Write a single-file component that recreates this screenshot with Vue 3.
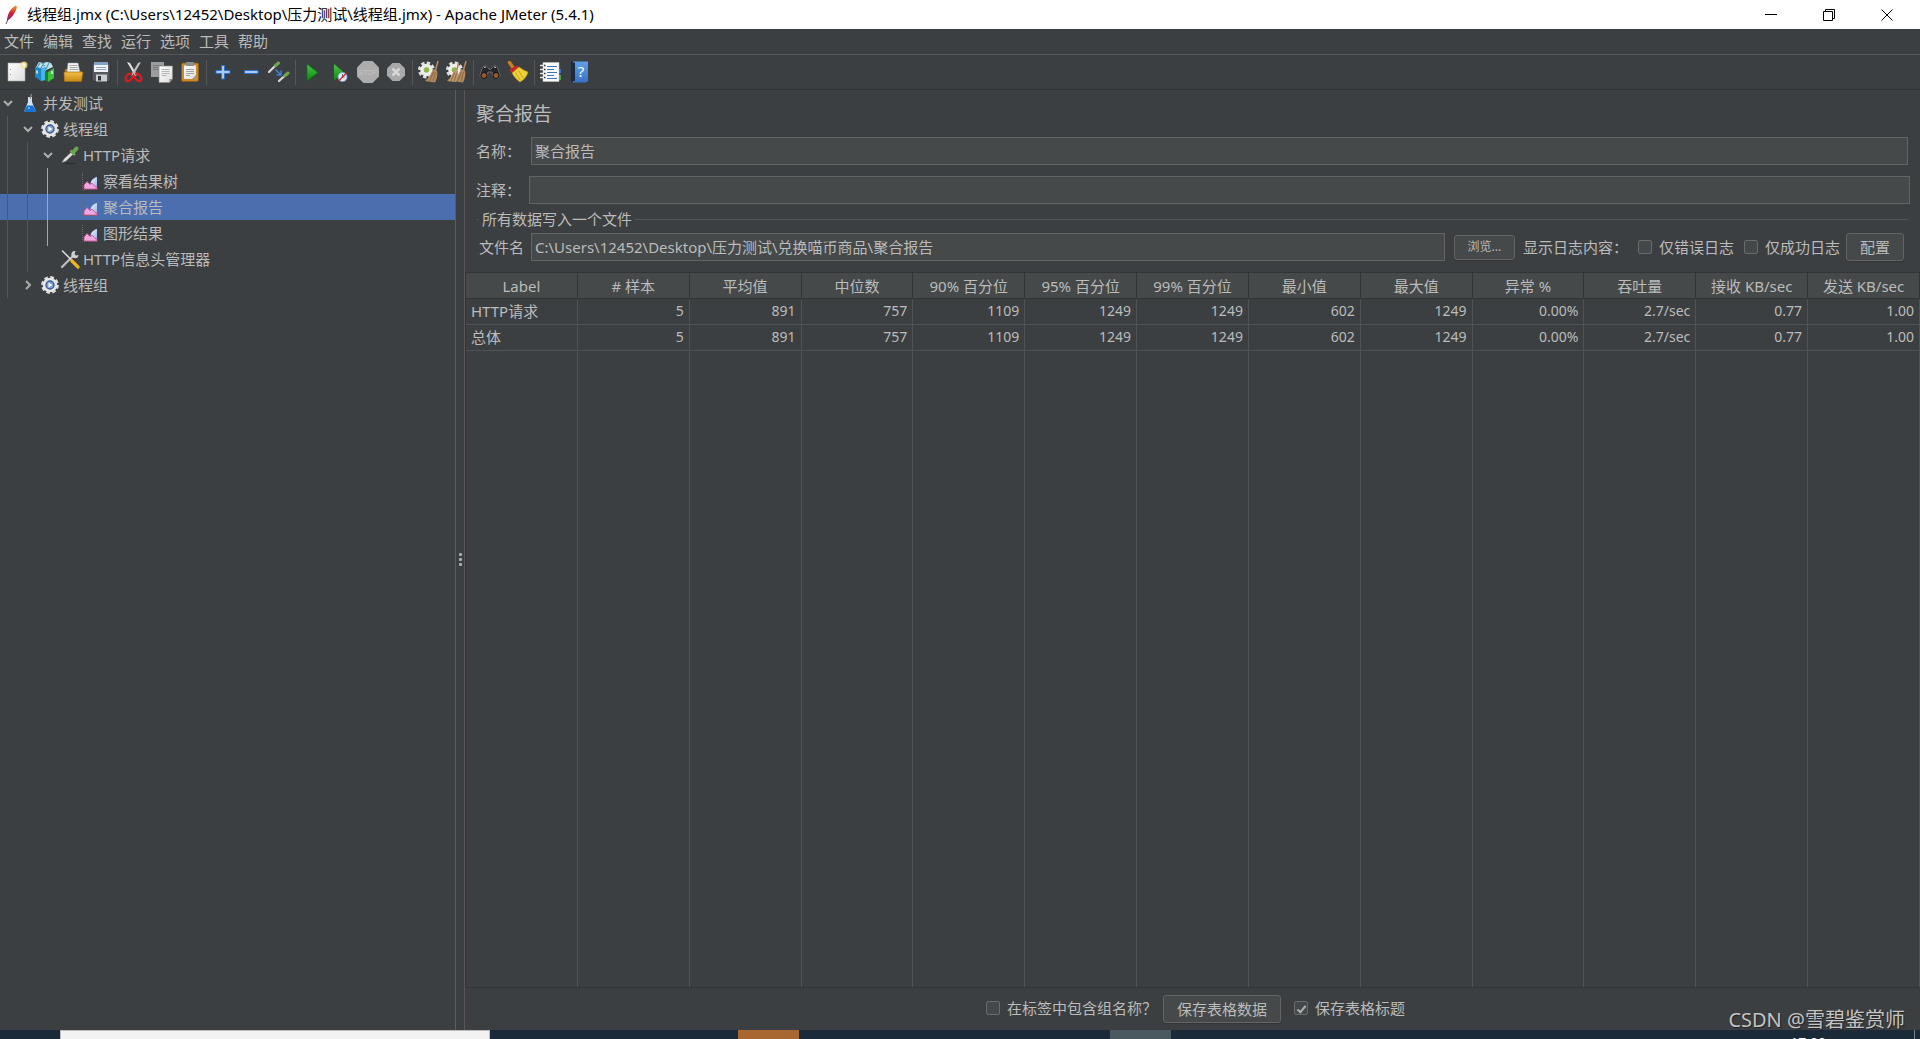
<script setup>
import { ref } from 'vue'

const title = '线程组.jmx (C:\\Users\\12452\\Desktop\\压力测试\\线程组.jmx) - Apache JMeter (5.4.1)'
const menus = ['文件', '编辑', '查找', '运行', '选项', '工具', '帮助']

const tools = [
  [
    { id: 'new', label: '新建' },
    { id: 'templates', label: '模板' },
    { id: 'open', label: '打开' },
    { id: 'save', label: '保存' }
  ],
  [
    { id: 'cut', label: '剪切' },
    { id: 'copy', label: '复制' },
    { id: 'paste', label: '粘贴' }
  ],
  [
    { id: 'expand', label: '全部展开' },
    { id: 'collapse', label: '全部折叠' },
    { id: 'toggle', label: '切换' }
  ],
  [
    { id: 'start', label: '启动' },
    { id: 'start-now', label: '不停顿开始' },
    { id: 'stop', label: '停止' },
    { id: 'shutdown', label: '关闭' }
  ],
  [
    { id: 'clear', label: '清除' },
    { id: 'clear-all', label: '清除全部' }
  ],
  [
    { id: 'search', label: '查找' },
    { id: 'reset', label: '重置查找' }
  ],
  [
    { id: 'functions', label: '函数助手对话框' },
    { id: 'help', label: '帮助' }
  ]
]

const tree = [
  { level: 0, icon: 'flask', text: '并发测试', state: 'open' },
  { level: 1, icon: 'gear', text: '线程组', state: 'open' },
  { level: 2, icon: 'dropper', text: 'HTTP请求', state: 'open' },
  { level: 3, icon: 'chart', text: '察看结果树' },
  { level: 3, icon: 'chart', text: '聚合报告', selected: true },
  { level: 3, icon: 'chart', text: '图形结果' },
  { level: 2, icon: 'wrench', text: 'HTTP信息头管理器' },
  { level: 1, icon: 'gear', text: '线程组', state: 'closed' }
]

const columns = [
  'Label', '# 样本', '平均值', '中位数', '90% 百分位', '95% 百分位', '99% 百分位',
  '最小值', '最大值', '异常 %', '吞吐量', '接收 KB/sec', '发送 KB/sec'
]
const rows = [
  ['HTTP请求', '5', '891', '757', '1109', '1249', '1249', '602', '1249', '0.00%', '2.7/sec', '0.77', '1.00'],
  ['总体', '5', '891', '757', '1109', '1249', '1249', '602', '1249', '0.00%', '2.7/sec', '0.77', '1.00']
]

const name = ref('聚合报告')
const comment = ref('')
const file = ref('C:\\Users\\12452\\Desktop\\压力测试\\兑换喵币商品\\聚合报告')
const errorsOnly = ref(false)
const successOnly = ref(false)
const includeGroup = ref(false)
const saveHeader = ref(true)
</script>

<template>
  <div class="window">
    <svg class="defs" width="0" height="0" aria-hidden="true">
      <defs>
        <linearGradient id="gFeather" x1="0" y1="1" x2="0" y2="0">
          <stop offset="0" stop-color="#8a2a86" /><stop offset=".5" stop-color="#c9203c" /><stop offset="1" stop-color="#f59a23" />
        </linearGradient>
        <linearGradient id="gGreen" x1="0" y1="0" x2="0" y2="1">
          <stop offset="0" stop-color="#4bc24b" /><stop offset="1" stop-color="#0a8a0a" />
        </linearGradient>
        <linearGradient id="gGold" x1="0" y1="0" x2="0" y2="1">
          <stop offset="0" stop-color="#f0bf4a" /><stop offset="1" stop-color="#c98a10" />
        </linearGradient>
        <linearGradient id="gPaper" x1="0" y1="0" x2="1" y2="1">
          <stop offset="0" stop-color="#ffffff" /><stop offset="1" stop-color="#dcdcdc" />
        </linearGradient>
        <linearGradient id="gBook" x1="0" y1="0" x2="0" y2="1">
          <stop offset="0" stop-color="#5f9fe8" /><stop offset="1" stop-color="#3a72c4" />
        </linearGradient>
        <linearGradient id="gBlob" x1="0" y1="0" x2="1" y2="1">
          <stop offset="0" stop-color="#f4f8ff" /><stop offset="1" stop-color="#8fb2e6" />
        </linearGradient>
      </defs>
    </svg>

    <header class="titlebar">
      <svg class="feather" width="14" height="20" viewBox="0 0 14 20" aria-hidden="true">
        <path d="M2 19 4.500 13" stroke="#555" stroke-width="1" fill="none" />
        <path d="M3 16C3 11 5.500 5 9 2.500c1.500-1.500 3-2 3.500-1.500.8 1 0 3-1 5-1.500 3.500-4 7-8.500 10z" fill="url(#gFeather)" />
      </svg>
      <h1>{{ title }}</h1>
      <div class="controls">
        <button type="button" aria-label="最小化"><svg width="12" height="12" viewBox="0 0 12 12"><path d="M0 5.500h12" /></svg></button>
        <button type="button" aria-label="还原"><svg width="12" height="12" viewBox="0 0 12 12"><path d="M.5 2.500h9v9h-9zM2.500 2.500v-2h9v9h-2" /></svg></button>
        <button type="button" aria-label="关闭"><svg width="12" height="12" viewBox="0 0 12 12"><path d="M.5.5l11 11M11.500.5l-11 11" /></svg></button>
      </div>
    </header>

    <nav class="menubar">
      <button v-for="m in menus" :key="m" type="button">{{ m }}</button>
    </nav>

    <div class="toolbar" role="toolbar">
      <div v-for="(group, g) in tools" :key="g" class="group">
        <button v-for="t in group" :key="t.id" type="button" :aria-label="t.label">
          <svg width="22" height="22" viewBox="0 0 22 22" fill="none" aria-hidden="true">
            <template v-if="t.id === 'new'">
              <path d="M2 2h17v18H2z" fill="url(#gPaper)" stroke="#a8a8a0" stroke-width=".6" />
              <path d="M4.500 8v1M4.500 13v1" stroke="#999" />
              <circle cx="18" cy="4" r="3.500" fill="#f5e27a" opacity=".8" /><circle cx="18" cy="4" r="1.800" fill="#fffbe0" />
            </template>
            <template v-else-if="t.id === 'templates'">
              <path d="M2 6l3-5 4 1 4-1 4 1 2 4-7 3-9 1z" fill="#c5e2ea" />
              <path d="M6 2L3 7M10 2L7 7M15 2l-3 6M8 2l3 3" stroke="#4d9cb8" stroke-width="1.200" />
              <path d="M1 6l6 1v13l-6-4z" fill="#1d87c8" /><path d="M7 7l5-1v13l-5 1z" fill="#45b4ea" />
              <path d="M11 10l3 1v10l-3-2z" fill="#128a1c" /><path d="M14 11l6-4v10l-6 4z" fill="#3fbf3c" />
              <path d="M3 9.500v3M18 10v3" stroke="#e8f6ff" stroke-width="1.500" />
            </template>
            <template v-else-if="t.id === 'open'">
              <path d="M3 8h5l1 2h10v9H2z" fill="#b67c12" />
              <path d="M6 2h10l2 10H5z" fill="#f2f2f2" stroke="#aaa" stroke-width=".5" />
              <path d="M7.500 4.500h8M7.500 6.500h8M7.500 8.500h9" stroke="#a5a5a5" />
              <path d="M2 11h19l-1.500 9.500H2.500z" fill="url(#gGold)" stroke="#a06c0a" stroke-width=".7" />
            </template>
            <template v-else-if="t.id === 'save'">
              <path d="M2 2h18v18.500H3L2 19z" fill="#55595f" stroke="#2b2d30" stroke-width=".8" />
              <path d="M4 1.500h14V11H4z" fill="#eef2f7" /><path d="M4 1.500h14V4H4z" fill="#7fa3cf" />
              <path d="M6 6.500h10M6 8.500h10" stroke="#9aa5b3" />
              <path d="M6 13.500h11v7H6z" fill="#c9cdd2" /><path d="M8 15h3v4.500H8z" fill="#303338" />
            </template>
            <template v-else-if="t.id === 'cut'">
              <path d="M4 1l3 1 7 12-2 1z" fill="#e4e4e4" /><path d="M18 1l-3 1-7 12 2 1z" fill="#c4c4c4" />
              <path d="M9 13c-2-1-5 0-6 3s0 4.500 2.500 4 3.500-3 5-5.500c1.500 2.500 2.500 5 5 5.500s3.500-1.500 2.500-4-4-4-6-3" stroke="#d91d1d" stroke-width="2.200" />
            </template>
            <template v-else-if="t.id === 'copy'">
              <path d="M0 1h13v15H0z" fill="#9b9c9d" /><path d="M2 4.500h9M2 6.500h9M2 8.500h6" stroke="#77797a" />
              <path d="M8 5h13.500v13l-3 3.500H8z" fill="url(#gPaper)" stroke="#8b8b8b" stroke-width=".7" />
              <path d="M10.500 8.500h8M10.500 10.500h8M10.500 12.500h8M10.500 14.500h5" stroke="#b5b5b5" />
              <path d="M18.500 21.500v-3.500h3z" fill="#888" />
            </template>
            <template v-else-if="t.id === 'paste'">
              <rect x="2.500" y="2" width="17" height="18.500" rx="1.500" fill="#c98a2b" stroke="#8a5a12" stroke-width=".8" />
              <path d="M5 4.500h12V18H5z" fill="url(#gPaper)" /><rect x="7" y="1" width="8" height="4" rx="1" fill="#8c8f92" />
              <path d="M7 8.500h8M7 10.500h8M7 12.500h8M7 14.500h4" stroke="#a5a5a5" /><path d="M13 18l4-4v4z" fill="#999" />
            </template>
            <path v-else-if="t.id === 'expand'" d="M9.500 4.500h3v5H18v3h-5.500V18h-3v-5.500H4v-3h5.500z" fill="#a9ccf7" stroke="#2f6fc9" stroke-width="1" />
            <path v-else-if="t.id === 'collapse'" d="M4.500 9.500H18v3H4.500z" fill="#a9ccf7" stroke="#2f6fc9" stroke-width="1" />
            <template v-else-if="t.id === 'toggle'">
              <path d="M1 11l7-7" stroke="#d8dad6" stroke-width="2.200" stroke-linecap="round" /><path d="M7.500 4.500l3-2.500" stroke="#6ea84f" stroke-width="3" stroke-linecap="round" />
              <path d="M11 20l6-5.500" stroke="#d8dad6" stroke-width="2.200" stroke-linecap="round" /><path d="M16.500 15l3.500-3" stroke="#6ea84f" stroke-width="3" stroke-linecap="round" />
              <path d="M7.500 8.500l5 5M13 9.500v4.500H8.500" stroke="#3f7fdc" stroke-width="1.500" />
            </template>
            <path v-else-if="t.id === 'start'" d="M6 3l11 8.500L6 20z" fill="url(#gGreen)" stroke="#067006" stroke-width=".7" />
            <template v-else-if="t.id === 'start-now'">
              <path d="M5 3l9 7.500L5 20z" fill="url(#gGreen)" />
              <circle cx="13.500" cy="16" r="4.500" fill="#dfeaf7" stroke="#7fa4cf" stroke-width=".8" />
              <path d="M13.500 13v3h2" stroke="#4a6fa0" /><path d="M9.500 20l8-8" stroke="#d22" stroke-width="1.200" />
            </template>
            <template v-else-if="t.id === 'stop'">
              <path d="M6.500 0h9L22 6.500v9L15.500 22h-9L0 15.500v-9z" fill="#adadad" />
              <text x="11" y="14" class="stop-text" text-anchor="middle">STOP</text>
            </template>
            <template v-else-if="t.id === 'shutdown'">
              <path d="M7.500 2h7L20 7.500v7L14.500 20h-7L2 14.500v-7z" fill="#a9a9a9" />
              <path d="M7.500 7.500l7 7M14.500 7.500l-7 7" stroke="#d6d6d6" stroke-width="2.600" />
            </template>
            <template v-else-if="t.id === 'clear' || t.id === 'clear-all'">
              <circle cx="8.500" cy="9" r="7" stroke="#dfe0de" stroke-width="3" stroke-dasharray="3.300 2.200" />
              <circle cx="8.500" cy="9" r="4.500" fill="#8ab84a" stroke="#eceeea" stroke-width="3.500" />
              <path d="M20 0l-2.500 9" stroke="#b98a5c" stroke-width="1.500" />
              <path d="M15 8l4 1.500c1 4 0 8-2 12L7 20c4-3 6-7 8-12z" fill="#b08a5e" /><path d="M15.500 11l-4 9M17.500 11l-2.500 9" stroke="#7d5b36" stroke-width=".7" />
              <template v-if="t.id === 'clear-all'">
                <path d="M12.500 2L11 9" stroke="#b98a5c" stroke-width="1.500" />
                <path d="M8 9l4 1c.5 4-.5 7-2 11L1 20c4-3 5.500-7 7-11z" fill="#bd976a" /><path d="M8.500 12L5 20M10.500 12l-2 8" stroke="#7d5b36" stroke-width=".7" />
              </template>
            </template>
            <template v-else-if="t.id === 'search'">
              <path d="M3 8c1-4 5-4 6-1l2 2 2-2c1-3 5-3 6 1l2 6c.5 4-6 5-7 1l-1-4h-4l-1 4c-1 4-7 3-7-1z" fill="#25262a" stroke="#7d7f84" stroke-width=".7" />
              <circle cx="5" cy="14.500" r="3" fill="#9a5a28" stroke="#111" /><circle cx="17" cy="14.500" r="3" fill="#9a5a28" stroke="#111" />
              <path d="M5 6.500l2-.5M15 6l2 .5" stroke="#c8c8c8" />
            </template>
            <template v-else-if="t.id === 'reset'">
              <path d="M2.500 1.500L7 8" stroke="#c5801e" stroke-width="3.500" stroke-linecap="round" />
              <path d="M2 9l8-5 2 2-7 6z" fill="#c42525" />
              <path d="M5 12l7-6c3 2 6 4 9 5-1 4-4 8-8 10-3-2-6-5-8-9z" fill="#efd23a" stroke="#b99512" stroke-width=".6" />
              <path d="M8.500 11.500l5 8M11.500 9.500l5 8" stroke="#b99512" stroke-width=".8" />
            </template>
            <template v-else-if="t.id === 'functions'">
              <path d="M18 8h3v4h-3z" fill="#2f6fd0" /><path d="M18 14h3v5h-3z" fill="#4aa33c" />
              <path d="M3 1.500h16v19H3z" fill="#f8f8f8" stroke="#c8c8c8" stroke-width=".5" />
              <path d="M7 5.500h10M7 8.500h7M7 11.500h10M7 14.500h7M7 17.500h10" stroke="#3f76b8" />
              <path d="M0 4.500h5M0 8.500h5M0 12.500h5M0 16.500h5" stroke="#e8e8e8" stroke-width="1.500" /><path d="M4 4.500h1.500M4 8.500h1.500M4 12.500h1.500M4 16.500h1.500" stroke="#333" stroke-width="1.500" />
            </template>
            <template v-else>
              <path d="M3 1l2-.5V21l-2-.5z" fill="#1c2c44" /><path d="M5 .5h15V20l-2 1.500H5z" fill="url(#gBook)" />
              <path d="M3 1.500h4V20H3z" fill="#1d2b42" />
              <text x="13" y="16" class="help-text" text-anchor="middle">?</text>
            </template>
          </svg>
        </button>
      </div>
    </div>

    <main class="body">
      <aside class="tree">
        <ul role="tree">
          <li
            v-for="(n, i) in tree"
            :key="i"
            role="treeitem"
            :aria-level="n.level + 1"
            :aria-selected="!!n.selected"
            :class="{ selected: n.selected }"
          >
            <span v-for="g in n.level" :key="g" class="guide" :class="{ active: g === 3 }"></span>
            <span class="twisty">
              <svg v-if="n.state" width="10" height="10" viewBox="0 0 10 10" fill="none" stroke="#adadad" stroke-width="2">
                <path :d="n.state === 'open' ? 'M1 3l4 4 4-4' : 'M3 1l4 4-4 4'" />
              </svg>
            </span>
            <svg class="node" width="20" height="20" viewBox="0 0 20 20" fill="none" aria-hidden="true">
              <template v-if="n.icon === 'flask'">
                <path d="M8 4h4v5l3.500 8.500c0 1-1 1.500-1.500 1.500H6c-.8 0-1.500-.5-1.500-1.500L8 9z" fill="#cfe3f5" />
                <path d="M7 12.500h6l2.500 5c0 1-1 1.500-1.500 1.500H6c-.8 0-1.500-.5-1.500-1.500z" fill="#1674d6" /><path d="M10 6l1.500-5" stroke="#8a8d90" stroke-width="1.200" />
                <circle cx="9" cy="15" r="1" fill="#8cc8ff" />
              </template>
              <template v-else-if="n.icon === 'gear'">
                <circle cx="10" cy="10" r="7.600" stroke="#dcdcdc" stroke-width="2.600" stroke-dasharray="3.600 2.370" />
                <circle cx="10" cy="10" r="6" fill="#3c5f96" stroke="#e6e6e6" stroke-width="2.600" />
                <circle cx="10" cy="10" r="3.300" fill="#7da0d0" /><path d="M8.500 7.500l4 2.500-4 2.500z" fill="#fff" />
              </template>
              <template v-else-if="n.icon === 'dropper'">
                <ellipse cx="9" cy="18.500" rx="7" ry="1" fill="#2d2f31" />
                <path d="M2 17.500l2-3.500 8-7.500 2 2L6 16z" fill="#dfe3df" stroke="#8d918d" stroke-width=".6" />
                <path d="M10.500 5.500l4.500 4.500" stroke="#8fb07d" stroke-width="1.800" /><path d="M13 7.500l3.500-4" stroke="#67a64b" stroke-width="4" stroke-linecap="round" />
              </template>
              <template v-else-if="n.icon === 'chart'">
                <path d="M2.500 2v16.500H18" stroke="#66696b" stroke-dasharray="1 1" />
                <path d="M10.500 13c0-3 3-6.500 6.500-7v11h-5z" fill="url(#gBlob)" />
                <path d="M4 18v-4l3-3.500 3 3 2-1.500 3 3.500 2 .5v2z" fill="#f0a8e0" stroke="#c24a92" stroke-width=".8" />
              </template>
              <template v-else>
                <path d="M2 18l11-11" stroke="#b9bcbe" stroke-width="2.400" stroke-linecap="round" />
                <path d="M15.500 2a3.600 3.600 0 1 0 3 4l-2.500.5-1.500-1.500z" fill="#cfd2d4" />
                <path d="M2.500 2l9 9" stroke="#d8d8d8" stroke-width="1.600" stroke-linecap="round" /><path d="M12 12l6 6" stroke="#efb31c" stroke-width="3.200" stroke-linecap="round" />
              </template>
            </svg>
            <span class="text">{{ n.text }}</span>
          </li>
        </ul>
      </aside>

      <div class="splitter" role="separator"><i></i><i></i><i></i></div>

      <section class="panel">
        <h2>聚合报告</h2>
        <div class="field">
          <label for="name">名称：</label>
          <input id="name" v-model="name" type="text" />
        </div>
        <div class="field wide">
          <label for="comment">注释：</label>
          <input id="comment" v-model="comment" type="text" />
        </div>
        <fieldset>
          <legend>所有数据写入一个文件</legend>
          <div class="file-row">
            <label for="file">文件名</label>
            <input id="file" v-model="file" type="text" />
            <button type="button" class="btn small">浏览...</button>
            <span class="log">显示日志内容：</span>
            <label class="check"><input v-model="errorsOnly" type="checkbox" />仅错误日志</label>
            <label class="check"><input v-model="successOnly" type="checkbox" />仅成功日志</label>
            <button type="button" class="btn">配置</button>
          </div>
        </fieldset>

        <div class="results">
          <table>
            <thead>
              <tr><th v-for="c in columns" :key="c" scope="col">{{ c }}</th></tr>
            </thead>
            <tbody>
              <tr v-for="(r, i) in rows" :key="i"><td v-for="(c, j) in r" :key="j">{{ c }}</td></tr>
              <tr class="filler" aria-hidden="true"><td v-for="c in columns" :key="c"></td></tr>
            </tbody>
          </table>
        </div>

        <footer class="actions">
          <label class="check"><input v-model="includeGroup" type="checkbox" />在标签中包含组名称？</label>
          <button type="button" class="btn">保存表格数据</button>
          <label class="check"><input v-model="saveHeader" type="checkbox" />保存表格标题</label>
        </footer>
      </section>
    </main>

    <div class="taskbar">
      <span class="task search"></span>
      <span class="task orange"></span>
      <span class="task grey"></span>
      <time>17:00</time>
      <span class="desktop"></span>
    </div>

    <div class="watermark">CSDN @雪碧鉴赏师</div>
  </div>
</template>

<style>
body {
  margin: 0;
  background: #3c3f41;
}
</style>

<style scoped>
.window {
  position: relative;
  display: flex;
  flex-direction: column;
  min-height: 100vh;
  overflow: hidden;
  background: #3c3f41;
  color: #bbb;
  font: 15px/20px "Noto Sans", "Noto Sans CJK SC", sans-serif;
}
.window *,
.window *::before {
  box-sizing: border-box;
}
button,
input {
  margin: 0;
  padding: 0;
  border: 0;
  background: none;
  color: inherit;
  font: inherit;
}
.defs {
  position: absolute;
}

.titlebar {
  display: flex;
  align-items: center;
  height: 29px;
  padding: 0 4px;
  background: #fff;
  color: #000;
}
.titlebar h1 {
  flex: 1;
  margin: 0 0 0 9px;
  padding-bottom: 2px;
  font-size: 15px;
  font-weight: 400;
}
.controls {
  display: flex;
}
.controls button {
  display: flex;
  align-items: center;
  justify-content: center;
  width: 58px;
  height: 29px;
}
.controls svg {
  fill: none;
  stroke: #000;
}

.menubar {
  display: flex;
  gap: 9px;
  height: 26px;
  padding: 0 4px 2px;
  border-bottom: 1px solid #555;
}

.toolbar {
  display: flex;
  height: 35px;
  padding-left: 3px;
  border-bottom: 1px solid #323436;
}
.group {
  display: flex;
  align-items: center;
}
.group + .group::before {
  content: "";
  width: 1px;
  height: 25px;
  margin: 0 2px;
  background: #555;
}
.group button {
  display: flex;
  justify-content: center;
  width: 28px;
}
.stop-text {
  fill: #c4c4c4;
  font: 7px "Liberation Sans", sans-serif;
}
.help-text {
  fill: #fff;
  font: 15px "Noto Sans", sans-serif;
}

.body {
  display: flex;
  flex: 1;
}
.tree {
  width: 456px;
  border-right: 1px solid #5a5c5e;
}
.tree ul {
  margin: 0;
  padding: 0;
  list-style: none;
}
.tree li {
  display: flex;
  align-items: center;
  height: 26px;
}
.tree li.selected {
  background: #4b6eaf;
}
.guide {
  width: 13px;
  height: 26px;
  margin-left: 7px;
  border-left: 1px solid #55585a;
}
.guide.active {
  border-color: #6cb4ee;
}
.twisty {
  display: flex;
  justify-content: center;
  width: 15px;
  margin-right: 5px;
}
.text {
  margin-left: 3px;
  padding-bottom: 1px;
}
.splitter {
  display: flex;
  flex-direction: column;
  align-items: center;
  justify-content: center;
  gap: 2px;
  width: 9px;
  padding-bottom: 2px;
  border-right: 1px solid #5a5654;
}
.splitter i {
  width: 3px;
  height: 3px;
  border-radius: 1px;
  background: #adadad;
}

.panel {
  display: flex;
  flex: 1;
  flex-direction: column;
  min-width: 0;
}
h2 {
  margin: 0;
  padding: 2px 11px 0;
  font-size: 19px;
  font-weight: 400;
  line-height: 45px;
}
.field {
  display: flex;
  align-items: center;
  margin-bottom: 11px;
  padding: 0 12px 0 11px;
}
.field label {
  width: 55px;
}
.field.wide {
  margin-bottom: 1px;
  padding-right: 10px;
}
.field.wide label {
  width: 53px;
}
input[type="text"] {
  flex: 1;
  min-width: 0;
  height: 28px;
  padding: 0 3px 2px;
  border: 1px solid #646464;
  background: #45494a;
}
fieldset {
  min-width: 0;
  margin: 0 12px 11px;
  padding: 0;
  border: 0;
  border-top: 1px solid #555;
}
legend {
  height: 28px;
  margin-left: 2px;
  padding: 0 3px;
  line-height: 28px;
}
.file-row {
  display: flex;
  align-items: center;
  padding: 0 4px 0 2px;
}
.file-row > label:first-child {
  width: 52px;
}
.btn {
  height: 28px;
  padding: 0 13px;
  border: 1px solid #646464;
  border-radius: 3px;
  background: #45494a;
  box-shadow: 0 1px 1px #333537;
}
.btn.small {
  width: 61px;
  height: 25px;
  margin: 0 8px 0 9px;
  padding: 0;
  font-size: 12px;
}
.log {
  margin-right: 10px;
}
.check {
  display: flex;
  align-items: center;
  gap: 7px;
}
.file-row .check {
  margin-right: 10px;
}
.file-row .check + .btn {
  margin-left: -4px;
}
input[type="checkbox"] {
  display: grid;
  place-items: center;
  width: 14px;
  height: 14px;
  border: 1px solid #6b6b6b;
  border-radius: 2px;
  background: #43494a;
  appearance: none;
}
input[type="checkbox"]:checked::before {
  content: "";
  width: 5px;
  height: 9px;
  border: solid #b0b0b0;
  border-width: 0 2px 2px 0;
  transform: rotate(40deg);
}

.results {
  display: grid;
  flex: 1;
  border: solid #323436;
  border-width: 1px 0 1px 1px;
}
table {
  width: 100%;
  height: 100%;
  border-spacing: 0;
  table-layout: fixed;
}
th,
td {
  height: 26px;
  padding: 0 5px 1px;
  border-right: 1px solid #505355;
  border-bottom: 1px solid #505355;
  font-size: 14px;
  line-height: 20px;
  text-align: right;
  white-space: nowrap;
}
th {
  padding: 0;
  border-color: #323436;
  background: #45494a;
  font-size: 15px;
  font-weight: 400;
  text-align: center;
}
td:first-child {
  font-size: 15px;
  text-align: left;
}
.filler td {
  height: auto;
  border-bottom: 0;
}

.actions {
  display: flex;
  align-items: center;
  justify-content: center;
  height: 42px;
  padding-left: 6px;
}
.actions .check {
  padding-bottom: 2px;
}
.actions .btn {
  margin: 0 13px 0 6px;
}

.taskbar {
  display: flex;
  height: 9px;
  overflow: hidden;
  background: #1a2a38;
}
.task.search {
  width: 430px;
  margin-left: 60px;
  border: 1px solid #bdbdbd;
  border-bottom: 0;
  background: #f2f2f2;
}
.task.orange {
  width: 61px;
  margin-left: 248px;
  background: #a86630;
}
.task.grey {
  width: 61px;
  margin-left: 311px;
  background: #4a5860;
}
time {
  margin-left: auto;
  padding-top: 3px;
  color: #fff;
  font-size: 14px;
}
.desktop {
  width: 6px;
  margin-left: 88px;
  border-left: 1px solid #7d868d;
}

.watermark {
  position: absolute;
  right: 15px;
  bottom: 5px;
  color: #c4c4c4;
  font-size: 20px;
  line-height: 28px;
  text-shadow: 1px 1px 1px #222;
}
</style>
